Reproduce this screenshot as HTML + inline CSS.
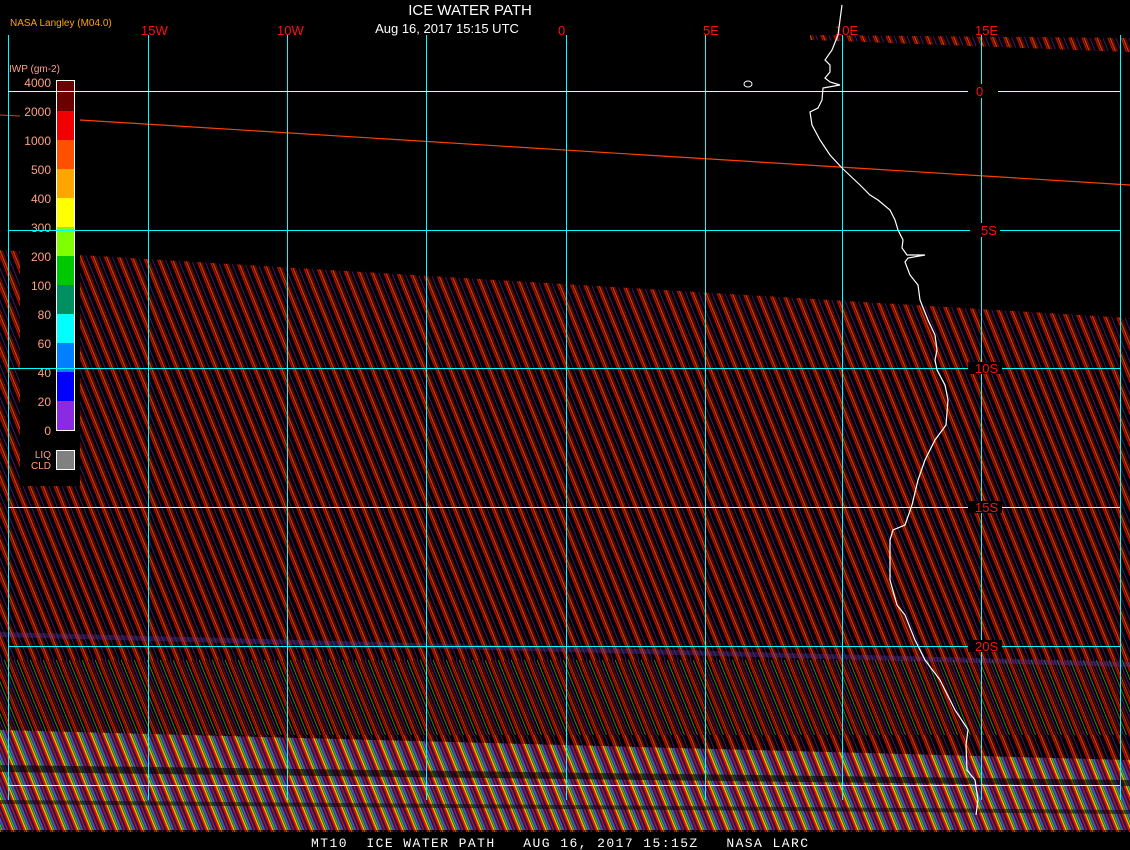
<!DOCTYPE html>
<html><head><meta charset="utf-8"><style>
html,body{margin:0;padding:0;background:#000;width:1130px;height:850px;overflow:hidden}
svg{display:block}
text{font-family:"Liberation Sans",sans-serif}
</style></head><body>
<svg width="1130" height="850" viewBox="0 0 1130 850" xmlns="http://www.w3.org/2000/svg">
<defs>
<pattern id="st" width="13" height="40" patternUnits="userSpaceOnUse" patternTransform="skewX(22)">
<rect width="13" height="40" fill="#000"/>
<rect x="0" width="1.5" height="40" fill="#d00000"/>
<rect x="2" width="1.5" height="40" fill="#ff6a00" opacity="0.7"/>
<rect x="4" width="1.5" height="40" fill="#7a0000"/>
<rect x="8" width="1" height="40" fill="#6a2ac0" opacity="0.6"/>
</pattern>
<pattern id="st2" width="13" height="40" patternUnits="userSpaceOnUse" patternTransform="skewX(22)">
<rect width="13" height="40" fill="#000"/>
<rect x="0" width="1.5" height="40" fill="#d00000"/>
<rect x="2" width="1" height="40" fill="#ff6a00" opacity="0.7"/>
<rect x="4" width="1.5" height="40" fill="#7a0000"/>
<rect x="7" width="1" height="40" fill="#6a2ac0" opacity="0.7"/>
<rect x="10" width="1" height="40" fill="#70e000" opacity="0.6"/>
</pattern>
<pattern id="st3" width="13" height="40" patternUnits="userSpaceOnUse" patternTransform="skewX(22)">
<rect width="13" height="40" fill="#2a1050"/>
<rect x="0" width="2" height="40" fill="#e01000"/>
<rect x="2" width="1.5" height="40" fill="#e0c000"/>
<rect x="4" width="1.5" height="40" fill="#30c020"/>
<rect x="6" width="2" height="40" fill="#5050c0"/>
<rect x="9.5" width="1.5" height="40" fill="#a02020"/>
</pattern>
</defs>
<rect width="1130" height="850" fill="#000"/>
<polygon points="0,250 80,255 1130,318 1130,832 0,832" fill="url(#st)"/>
<rect x="0" y="660" width="1130" height="75" fill="url(#st2)"/>
<polygon points="0,730 1130,760 1130,830 0,830" fill="url(#st3)"/>
<polygon points="0,765 1130,780 1130,786 0,772" fill="#000" opacity="0.6"/>
<polygon points="0,800 1130,810 1130,814 0,804" fill="#000" opacity="0.5"/>
<polygon points="0,632 1130,662 1130,667 0,637" fill="#6040b0" opacity="0.35"/>
<polygon points="810,35 1130,38 1130,52 810,40" fill="url(#st)"/>
<rect x="20" y="78" width="60" height="408" fill="#000"/>
<rect x="56" y="80" width="19" height="351" fill="#fff"/>
<rect x="57" y="81" width="17" height="30" fill="#6b0000"/>
<rect x="57" y="111" width="17" height="29" fill="#f00000"/>
<rect x="57" y="140" width="17" height="29" fill="#ff5000"/>
<rect x="57" y="169" width="17" height="29" fill="#ffa500"/>
<rect x="57" y="198" width="17" height="29" fill="#ffff00"/>
<rect x="57" y="227" width="17" height="29" fill="#80ff00"/>
<rect x="57" y="256" width="17" height="29" fill="#00c800"/>
<rect x="57" y="285" width="17" height="29" fill="#008f60"/>
<rect x="57" y="314" width="17" height="29" fill="#00ffff"/>
<rect x="57" y="343" width="17" height="29" fill="#0080ff"/>
<rect x="57" y="372" width="17" height="29" fill="#0000ff"/>
<rect x="57" y="401" width="17" height="29" fill="#8a2be2"/>
<rect x="56" y="450" width="19" height="20" fill="#fff"/>
<rect x="57" y="451" width="17" height="18" fill="#808080"/>
<g fill="#ffa080" font-size="12" text-anchor="end">
<text x="51" y="87">4000</text><text x="51" y="116">2000</text><text x="51" y="145">1000</text>
<text x="51" y="174">500</text><text x="51" y="203">400</text><text x="51" y="232">300</text>
<text x="51" y="261">200</text><text x="51" y="290">100</text><text x="51" y="319">80</text>
<text x="51" y="348">60</text><text x="51" y="377">40</text><text x="51" y="406">20</text>
<text x="51" y="435">0</text><text x="51" y="458" font-size="10">LIQ</text><text x="51" y="469" font-size="10">CLD</text>
</g>
<text x="9" y="72" fill="#ffa080" font-size="10">IWP (gm-2)</text>
<line x1="80" y1="120" x2="1130" y2="185" stroke="#ff4000" stroke-width="1.2"/>
<line x1="0" y1="115" x2="20" y2="116" stroke="#ff3000" stroke-width="1"/>
<g stroke="#00ffff" stroke-width="1">
<line x1="8.5" y1="35" x2="8.5" y2="800"/><line x1="148.5" y1="35" x2="148.5" y2="800"/>
<line x1="287.5" y1="35" x2="287.5" y2="800"/><line x1="426.5" y1="35" x2="426.5" y2="800"/>
<line x1="566.5" y1="35" x2="566.5" y2="800"/><line x1="705.5" y1="35" x2="705.5" y2="800"/>
<line x1="842.5" y1="35" x2="842.5" y2="800"/><line x1="981.5" y1="35" x2="981.5" y2="800"/>
<line x1="1120.5" y1="35" x2="1120.5" y2="800"/>
<line x1="8" y1="91.5" x2="1120" y2="91.5" stroke="#d0f8ff"/><line x1="8" y1="230.5" x2="1120" y2="230.5"/>
<line x1="8" y1="368.5" x2="1120" y2="368.5"/><line x1="8" y1="507.5" x2="1120" y2="507.5" stroke="#d0f8ff"/>
<line x1="8" y1="646.5" x2="1120" y2="646.5"/><line x1="8" y1="785.5" x2="1120" y2="785.5" stroke="#d0f8ff"/>
</g>
<g fill="#000"><rect x="968" y="84" width="30" height="14"/><rect x="970" y="223" width="30" height="14"/>
<rect x="968" y="362" width="34" height="12"/><rect x="968" y="501" width="34" height="12"/><rect x="968" y="640" width="34" height="12"/></g>
<g fill="#ff1010" font-size="13">
<text x="141" y="35">15W</text><text x="277" y="35">10W</text><text x="558" y="35">0</text>
<text x="703" y="35">5E</text><text x="835" y="35">10E</text><text x="975" y="35">15E</text>
<text x="976" y="96">0</text><text x="981" y="235">5S</text><text x="975" y="373">10S</text>
<text x="975" y="512">15S</text><text x="975" y="651">20S</text>
</g>
<polyline fill="none" stroke="#fff" stroke-width="1.2" points="842,5 838,35 832,50 825,60 830,65 830,72 825,78 830,82 840,85 823,88 822,100 818,108 810,112 812,125 820,140 830,155 842,168 860,185 870,195 878,200 890,210 895,220 898,230 903,240 902,248 907,255 925,255 908,258 905,262 910,275 918,285 920,300 928,320 935,335 937,350 935,360 937,370 945,385 948,400 946,425 935,440 925,460 918,480 912,505 905,525 893,530 890,540 890,580 897,605 905,615 915,640 925,660 940,680 955,710 965,725 968,730 966,745 967,770 975,780 978,800 976,815"/>
<ellipse cx="748" cy="84" rx="4" ry="3" fill="none" stroke="#fff" stroke-width="1"/>
<text x="10" y="26" fill="#ffa500" font-size="10">NASA Langley (M04.0)</text>
<text x="470" y="15" fill="#fff" font-size="15" text-anchor="middle">ICE WATER PATH</text>
<text x="447" y="33" fill="#fff" font-size="13" text-anchor="middle">Aug 16, 2017 15:15 UTC</text>
<rect x="0" y="832" width="1130" height="18" fill="#000"/>
<text x="311" y="847" fill="#fff" font-size="13" textLength="497" lengthAdjust="spacing" xml:space="preserve" style="font-family:'Liberation Mono',monospace">MT10  ICE WATER PATH   AUG 16, 2017 15:15Z   NASA LARC</text>
</svg>
</body></html>
